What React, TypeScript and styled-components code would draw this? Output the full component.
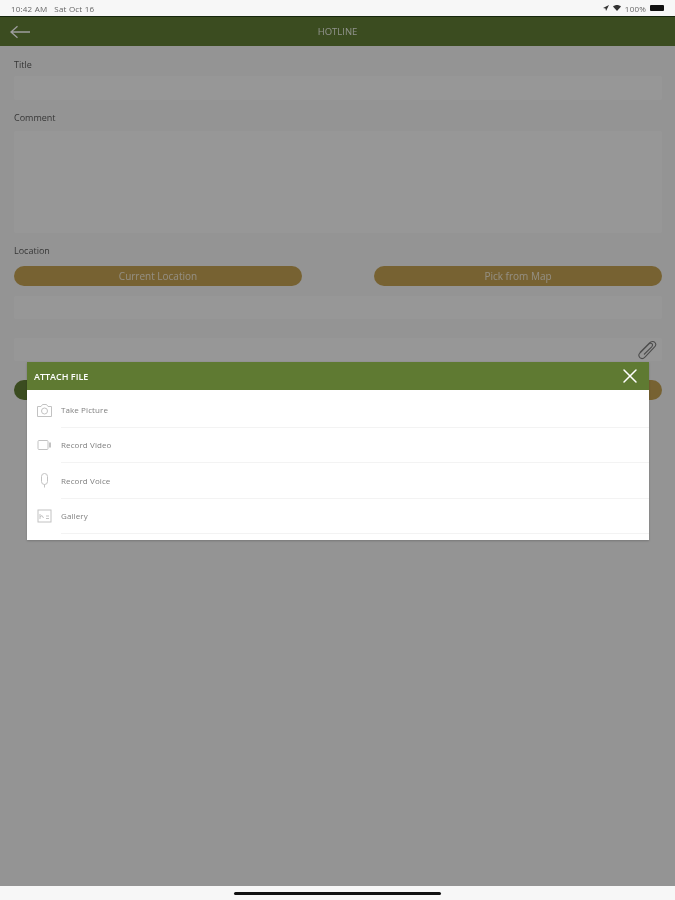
import React from "react";
import styled, { createGlobalStyle } from "styled-components";
import { X } from "lucide-react";

const GlobalStyle = createGlobalStyle`
  html, body {
    margin: 0;
    padding: 0;
    background: #f7f7f7;
    font-family: "Open Sans", "Liberation Sans", sans-serif;
  }
  * { box-sizing: border-box; }
`;

const Page = styled.div`
  width: 675px;
  height: 900px;
  display: flex;
  flex-direction: column;
  overflow: hidden;
`;

const StatusBar = styled.div`
  height: 16px;
  padding: 0 11px 0 11px;
  background: #f7f7f7;
  display: flex;
  align-items: center;
  justify-content: space-between;
  font-size: 8px;
  letter-spacing: 0.2px;
  color: #666;
  filter: blur(0.4px);
`;

const StatusLeft = styled.div`
  display: flex;
  gap: 7px;
`;

const StatusRight = styled.div`
  display: flex;
  align-items: center;
  gap: 4px;
`;

const Battery = styled.div`
  width: 14px;
  height: 6px;
  border-radius: 1px;
  background: #111;
`;

const Main = styled.div`
  position: relative;
  flex: 1;
  display: flex;
  flex-direction: column;
  background: #f0f0f0;
`;

const Header = styled.header`
  height: 30px;
  padding: 0 10px;
  display: flex;
  align-items: center;
  border-top: 1px solid #244016;
  background: #617c34;
  color: #fff;
`;

const BackArrow = styled.svg`
  width: 20px;
  height: 14px;
  filter: blur(0.3px);
`;

const HeaderTitle = styled.div`
  flex: 1;
  padding-right: 20px;
  text-align: center;
  font-size: 9.5px;
  color: #fff;
  opacity: 0.85;
  filter: blur(0.4px);
`;

const Form = styled.div`
  padding: 13px 13px 0 14px;
  display: flex;
  flex-direction: column;
`;

const Label = styled.div<{ $top: number }>`
  height: 12px;
  margin-top: ${(p) => p.$top}px;
  font-size: 9px;
  line-height: 12px;
  color: #5a5a5a;
  filter: blur(0.4px);
`;

const Field = styled.div<{ $height: number; $top: number }>`
  height: ${(p) => p.$height}px;
  margin-top: ${(p) => p.$top}px;
  background: #f6f6f6;
  border-radius: 2px;
`;

const ClipField = styled(Field)`
  display: flex;
  align-items: center;
  justify-content: flex-end;
  padding-right: 5px;
  color: #7c7c7c;
`;

const ButtonRow = styled.div<{ $top: number }>`
  margin-top: ${(p) => p.$top}px;
  display: flex;
  justify-content: space-between;
`;

const PillButton = styled.div<{ $green?: boolean }>`
  width: 288px;
  height: 20px;
  border-radius: 10px;
  background: ${(p) => (p.$green ? "#617c34" : "#c2a052")};
  color: #fff;
  font-size: 10px;
  line-height: 20px;
  text-align: center;
`;

const PillText = styled.span`
  display: inline-block;
  opacity: 0.75;
  filter: blur(0.4px);
`;

const Backdrop = styled.div`
  position: absolute;
  inset: 0;
  padding: 346px 26px 0 27px;
  background: rgba(0, 0, 0, 0.385);
`;

const Dialog = styled.div`
  background: #fff;
  padding-bottom: 6px;
  box-shadow: 0 1px 2px rgba(0, 0, 0, 0.2);
`;

const DialogHeader = styled.div`
  height: 28px;
  margin-bottom: 2px;
  padding: 0 7px;
  display: flex;
  align-items: center;
  justify-content: space-between;
  background: #5f7a32;
  color: #fff;
  font-size: 9px;
  font-weight: 600;
`;

const HeaderLabel = styled.span`
  filter: blur(0.3px);
`;

const CloseButton = styled.div`
  display: flex;
  color: #fff;
`;

const Row = styled.div`
  height: 35.5px;
  padding-left: 10px;
  display: flex;
  align-items: center;
`;

const RowIcon = styled.div`
  width: 24px;
  display: flex;
  justify-content: flex-start;
  color: #c2c2c2;
  filter: blur(0.3px);
`;

const RowBody = styled.div`
  flex: 1;
  height: 100%;
  display: flex;
  align-items: center;
  border-bottom: 1px solid #f3f3f3;
  font-size: 8px;
  letter-spacing: 0.1px;
`;

const RowLabel = styled.span`
  color: #808080;
  filter: blur(0.4px);
`;

const HomeBar = styled.div`
  height: 14px;
  display: flex;
  justify-content: center;
  padding-top: 6px;
  background: #f7f7f7;
`;

const HomeIndicator = styled.div`
  width: 207px;
  height: 3px;
  border-radius: 2px;
  background: #111;
`;

const CameraIcon = () => (
  <svg width="15" height="14" viewBox="0 0 15 14" fill="none" stroke="currentColor" strokeWidth="1">
    <path d="M.5 3.5h3.5L5.500 1.500h4l1.500 2h3.500v10H.5z" />
    <circle cx="7.500" cy="8" r="3" />
  </svg>
);

const VideoIcon = () => (
  <svg width="15" height="12" viewBox="0 0 15 12" fill="none" stroke="currentColor" strokeWidth="1">
    <rect x="1" y="1.500" width="10" height="9" rx="1" />
    <path d="M13 3.500v5" strokeWidth="2" />
  </svg>
);

const MicIcon = () => (
  <svg width="15" height="15" viewBox="0 0 15 15" fill="none" stroke="currentColor" strokeWidth="1">
    <rect x="4.500" y="0.500" width="6" height="11" rx="3" />
    <path d="M7.500 11.500v3" />
  </svg>
);

const GalleryIcon = () => (
  <svg width="15" height="14" viewBox="0 0 15 14" fill="none" stroke="currentColor" strokeWidth="1">
    <rect x="1" y="1" width="13" height="12" />
    <path d="M3 5v5M3 8l2-1.500L6.500 9M9 7h3M9 9.500h3" />
  </svg>
);

const attachOptions = [
  { label: "Take Picture", icon: <CameraIcon /> },
  { label: "Record Video", icon: <VideoIcon /> },
  { label: "Record Voice", icon: <MicIcon /> },
  { label: "Gallery", icon: <GalleryIcon /> },
];

export default function App() {
  return (
    <Page>
      <GlobalStyle />
      <StatusBar>
        <StatusLeft>
          <span>10:42 AM</span>
          <span>Sat Oct 16</span>
        </StatusLeft>
        <StatusRight>
          <svg width="6" height="6" viewBox="0 0 6 6"><path d="M6 0L0 3l2.500.5L3 6z" fill="#333" /></svg>
          <svg width="8" height="6" viewBox="0 0 8 6"><path d="M0 1.500C2.400-.5 5.600-.5 8 1.500L4 6z" fill="#333" /></svg>
          <span>100%</span>
          <Battery />
        </StatusRight>
      </StatusBar>
      <Main>
        <Header>
          <BackArrow viewBox="0 0 20 14" fill="none" stroke="currentColor" strokeWidth="1.300">
            <path d="M1 7h19M7.500 1.200L1 7l6.500 5.800" />
          </BackArrow>
          <HeaderTitle>HOTLINE</HeaderTitle>
        </Header>
        <Form>
          <Label $top={0}>Title</Label>
          <Field $height={24} $top={5} />
          <Label $top={12}>Comment</Label>
          <Field $height={102} $top={7} />
          <Label $top={12}>Location</Label>
          <ButtonRow $top={9}>
            <PillButton><PillText>Current Location</PillText></PillButton>
            <PillButton><PillText>Pick from Map</PillText></PillButton>
          </ButtonRow>
          <Field $height={23} $top={10} />
          <ClipField $height={23} $top={19}>
            <svg width="20" height="20" viewBox="0 0 20 20" fill="none" stroke="currentColor" strokeWidth="1.100">
              <path d="M3 12.500L12.500 2.800c1.800-1.800 4.300-1.600 5.300-.5 1.200 1.200 1.100 3.300-.4 4.900L8.200 16.800c-1.800 1.900-4 2-5.300.8-1.300-1.300-1.200-3.300 0-4.600L11.800 4c1-1 2.300-1 3.100-.3.800.8.700 2.100-.2 3.100L7 14.500" />
            </svg>
          </ClipField>
          <ButtonRow $top={19}>
            <PillButton $green />
            <PillButton />
          </ButtonRow>
        </Form>
        <Backdrop>
          <Dialog>
            <DialogHeader>
              <HeaderLabel>ATTACH FILE</HeaderLabel>
              <CloseButton>
                <X size={24} strokeWidth={1.5} />
              </CloseButton>
            </DialogHeader>
            {attachOptions.map((option) => (
              <Row key={option.label}>
                <RowIcon>{option.icon}</RowIcon>
                <RowBody><RowLabel>{option.label}</RowLabel></RowBody>
              </Row>
            ))}
          </Dialog>
        </Backdrop>
      </Main>
      <HomeBar>
        <HomeIndicator />
      </HomeBar>
    </Page>
  );
}
